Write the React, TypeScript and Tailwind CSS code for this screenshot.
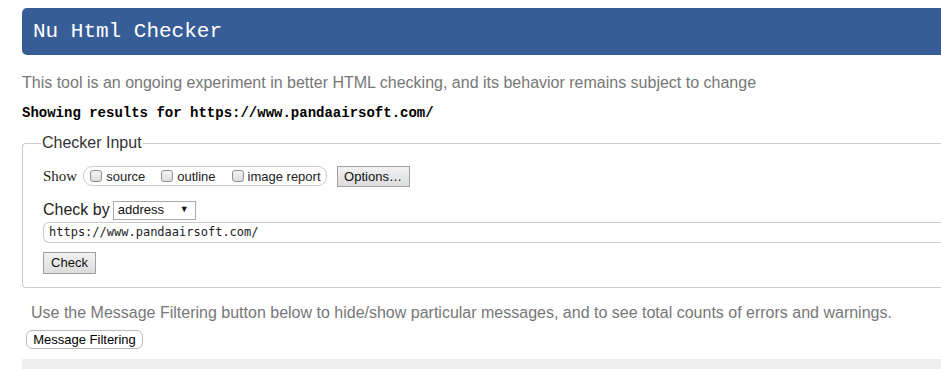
import React from 'react';

const sans = "font-[family-name:'Liberation_Sans',Arial,sans-serif]";
const mono = "font-[family-name:'Liberation_Mono','Courier_New',monospace]";

function Box({ label }: { label: string }) {
  return (
    <label className="flex shrink-0 items-center gap-[4px] whitespace-nowrap">
      <span className="inline-block h-[12px] w-[12px] shrink-0 rounded-[3px] border border-[#8f8f8f] bg-gradient-to-b from-[#f4f4f4] to-[#dcdcdc]" />
      <span className="text-[13px] text-[#222]">{label}</span>
    </label>
  );
}

export default function App() {
  return (
    <div className={`${sans} min-h-[369px] w-[941px] overflow-hidden bg-white pl-[22px] pt-[8px]`}>
      <h1 className={`${mono} flex h-[47px] w-[940px] items-center rounded-l-[5px] bg-[#365d95] pl-[11px] text-[21px] leading-none text-white`}>
        Nu Html Checker
      </h1>
      <p className="mt-[17px] text-[16px] leading-[22px] text-[#777]">
        This tool is an ongoing experiment in better HTML checking, and its behavior remains subject to change
      </p>
      <p className={`${mono} mt-[10px] text-[14px] font-bold leading-[18px] text-black`}>
        Showing results for https://www.pandaairsoft.com/
      </p>
      <fieldset className="mt-[12px] w-[940px] rounded-l-[4px] border border-r-0 border-[#ccc] pb-[13px] pl-[20px] pr-0">
        <legend className="-ml-[2px] px-[1px] text-[16px] leading-[18px] text-[#333]">Checker Input</legend>
        <div className="mt-[13px] flex items-center">
          <span className="font-[family-name:'Liberation_Serif',serif] text-[15px] text-[#222]">Show</span>
          <div className="ml-[6px] flex h-[20px] shrink-0 items-center gap-[16px] rounded-[9px] border border-[#ccc] pl-[6px] pr-[5px]">
            <Box label="source" />
            <Box label="outline" />
            <Box label="image report" />
          </div>
          <button className="ml-[10px] h-[21px] w-[73px] border border-[#a0a0a0] bg-gradient-to-b from-[#f2f2f2] to-[#dcdcdc] text-[13px] text-[#111]">
            Options…
          </button>
        </div>
        <div className="mt-[13px] flex items-center">
          <span className="text-[16px] leading-[18px] text-[#222]">Check by</span>
          <div className="ml-[3px] flex h-[19px] w-[83px] items-center justify-between border border-[#a9a9a9] bg-white pl-[4px] pr-[6px] text-[13px] text-[#111]">
            <span>address</span>
            <span className="text-[9px]">▼</span>
          </div>
        </div>
        <div className="mt-[2px] flex h-[21px] items-center rounded-l-[6px] border border-r-0 border-[#ccc] pl-[5px] font-[family-name:'DejaVu_Sans_Mono',monospace] text-[12px] text-[#222]">
          https://www.pandaairsoft.com/
        </div>
        <button className="mt-[9px] h-[22px] w-[53px] border border-[#a0a0a0] bg-gradient-to-b from-[#f2f2f2] to-[#dcdcdc] text-[13px] text-[#111]">
          Check
        </button>
      </fieldset>
      <p className="ml-[9px] mt-[14px] text-[16px] leading-[22px] text-[#777]">
        Use the Message Filtering button below to hide/show particular messages, and to see total counts of errors and warnings.
      </p>
      <button className="ml-[4px] mt-[6px] h-[19px] w-[117px] rounded-[6px] border border-[#bbb] bg-white text-[13px] leading-none text-black">
        Message Filtering
      </button>
      <div className="mt-[8px] h-[20px] w-[940px] bg-[#eee]" />
    </div>
  );
}
